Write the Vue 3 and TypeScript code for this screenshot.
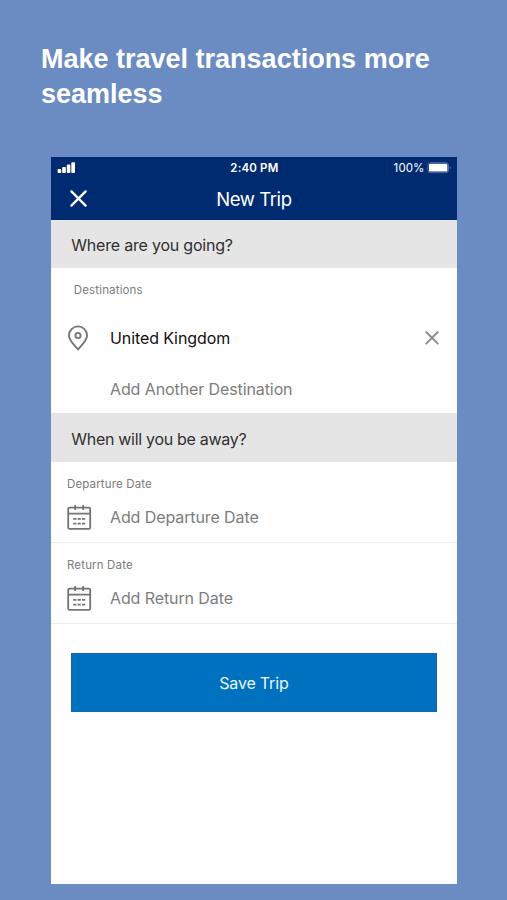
<script setup lang="ts">
interface DateField {
  label: string
  placeholder: string
  kind: string
}

const dateFields: DateField[] = [
  { label: 'Departure Date', placeholder: 'Add Departure Date', kind: 'departure' },
  { label: 'Return Date', placeholder: 'Add Return Date', kind: 'return' },
]
</script>

<template>
  <main class="page">
    <h1 class="headline">Make travel transactions more seamless</h1>

    <section class="phone">
      <header class="top">
        <div class="status">
          <svg class="signal" width="19" height="12" viewBox="0 0 19 12" fill="#fff">
            <rect x="0.6" y="7" width="3.6" height="4" rx="0.8" />
            <rect x="5.2" y="5" width="3.6" height="6" rx="0.8" />
            <rect x="9.8" y="2.6" width="3.6" height="8.4" rx="0.8" />
            <rect x="14.3" y="0.2" width="3.7" height="10.8" rx="0.8" />
          </svg>
          <span class="clock">2:40 PM</span>
          <span class="power">
            <span class="percent">100%</span>
            <svg width="25" height="12" viewBox="0 0 25 12">
              <rect x="0.9" y="0.7" width="20.6" height="10" rx="2.4" fill="none" stroke="#5874a6" stroke-width="0.9" />
              <rect x="2" y="1.8" width="18.4" height="7.8" rx="1.2" fill="#fff" />
              <path d="M22.7 4v3.4c1.3-.5 1.3-2.9 0-3.4z" fill="#5874a6" />
            </svg>
          </span>
        </div>
        <div class="navbar">
          <svg class="close" width="18" height="18" viewBox="0 0 18 18">
            <path d="M2.4 1.4 16.6 15.6M16.6 1.4 2.4 15.6" stroke="#fff" stroke-width="2.3" stroke-linecap="round" />
          </svg>
          <span class="title">New Trip</span>
        </div>
      </header>

      <h2 class="section where">Where are you going?</h2>
      <div class="destinations">
        <div class="label dest-label">Destinations</div>
        <div class="row">
          <svg class="icon" width="22" height="26" viewBox="0 0 22 26" fill="none" stroke="#777" stroke-width="1.9">
            <path d="M11 24.4C8.4 21.1 1.9 15.5 1.9 10.5a9.1 9.1 0 0 1 18.2 0C20.1 15.5 13.6 21.1 11 24.4z" stroke-linejoin="round" />
            <circle cx="11" cy="10.5" r="2.6" />
          </svg>
          <span class="value country">United Kingdom</span>
          <svg class="remove" width="16" height="16" viewBox="0 0 16 16">
            <path d="M1.7 1.5 14.3 14.1M14.3 1.5 1.7 14.1" stroke="#8d8d8d" stroke-width="1.9" />
          </svg>
        </div>
        <div class="row another">
          <span class="value">Add Another Destination</span>
        </div>
      </div>

      <h2 class="section when">When will you be away?</h2>
      <div v-for="field in dateFields" :key="field.kind" class="date" :class="field.kind">
        <div class="label">{{ field.label }}</div>
        <div class="row">
          <svg class="icon calendar" width="26" height="26" viewBox="0 0 26 26" fill="none" stroke="#737373" stroke-width="1.8">
            <rect x="2.2" y="3.6" width="22" height="21.2" rx="1.4" />
            <path d="M2.4 9.6h21.6M9.2 0.9v5M17.2 0.9v5" />
            <path d="M7.2 14.9h3.2M11.6 14.9h3.2M16 14.9h3.2M7.2 19.6h3.2M11.6 19.6h3.2M16 19.6h3.2" />
          </svg>
          <span class="value">{{ field.placeholder }}</span>
        </div>
      </div>

      <button class="save" type="button"><span>Save Trip</span></button>
    </section>
  </main>
</template>

<style>
body {
  background: #6b8cc2;
}
</style>

<style scoped>
.page {
  box-sizing: border-box;
  height: 900px;
  padding: 42px 50.5px 0 51.3px;
  background: #6b8cc2;
  font-family: Inter, "Liberation Sans", sans-serif;
}
.headline {
  margin: 0 -20px 0 -10.3px;
  height: 115px;
  color: #fff;
  font: bold 27px/35px "Liberation Sans", Arial, sans-serif;
}
.phone {
  height: 727px;
  background: #fefefe;
}
.top {
  height: 63px;
  background: #002b70;
  color: #fff;
}
.status {
  display: grid;
  grid-template-columns: 1fr auto 1fr;
  align-items: center;
  height: 21px;
  padding: 0 5px 0 6px;
}
.clock {
  font-size: 11.5px;
  font-weight: 600;
  letter-spacing: 0.15px;
}
.power {
  display: flex;
  justify-content: flex-end;
  align-items: center;
  gap: 2px;
}
.percent {
  font-size: 11.5px;
  letter-spacing: 0.1px;
}
.navbar {
  display: grid;
  grid-template-columns: 1fr auto 1fr;
  align-items: center;
  height: 41px;
  padding: 0 18px;
}
.title {
  font-size: 18.5px;
  letter-spacing: -0.4px;
}
.section {
  box-sizing: border-box;
  display: flex;
  align-items: center;
  height: 48px;
  margin: 0;
  padding: 2px 20px 0;
  background: #e5e5e5;
  color: #303030;
  font-size: 16px;
  font-weight: 400;
  letter-spacing: -0.21px;
}
.when {
  height: 49px;
  letter-spacing: -0.3px;
}
.destinations {
  height: 145px;
}
.label {
  color: #7d7d7d;
  font-size: 11.5px;
  line-height: 14px;
  letter-spacing: 0.15px;
}
.dest-label {
  padding: 15px 0 0 22.5px;
}
.row {
  display: flex;
  align-items: center;
}
.destinations .row {
  height: 51px;
  margin-top: 15px;
  padding: 0 17px 0 16px;
}
.destinations .another {
  margin-top: 0;
  padding-left: 58.7px;
}
.icon {
  flex: none;
  margin-right: 20.7px;
}
.value {
  color: #7d7d7d;
  font-size: 16px;
  letter-spacing: -0.1px;
}
.destinations .country {
  flex: 1;
  color: #111;
}
.date {
  box-sizing: border-box;
  height: 81px;
  padding: 15px 0 0 15.7px;
  border-bottom: 1px solid #ebeded;
}
.date .row {
  height: 26px;
  margin-top: 13px;
}
.calendar {
  margin: 0 18.4px 0 -1.4px;
}
.save {
  display: flex;
  align-items: center;
  justify-content: center;
  width: 366px;
  height: 59px;
  margin: 29px 0 0 19.6px;
  padding: 0;
  border: 1px solid #1967a8;
  background: #0071be;
  color: #eaf6ff;
  font-family: inherit;
  font-size: 16px;
  letter-spacing: -0.18px;
}
</style>
